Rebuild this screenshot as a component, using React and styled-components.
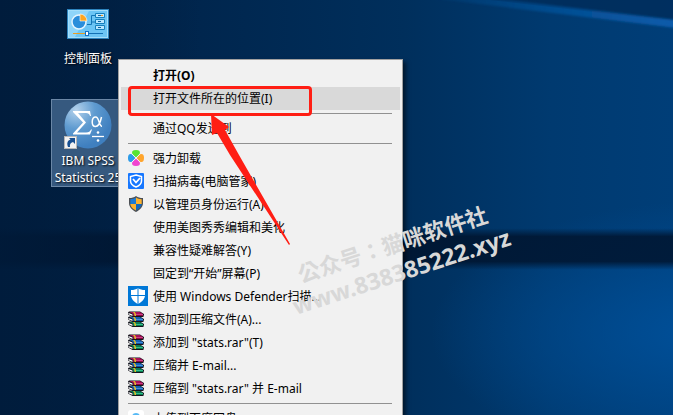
import React from "react";
import styled, { createGlobalStyle } from "styled-components";

const GlobalStyle = createGlobalStyle`
  * {
    box-sizing: border-box;
  }

  body {
    margin: 0;
    overflow: hidden;
    font-family: "Noto Sans", "Noto Sans CJK SC", sans-serif;
    font-size: 12px;
  }
`;

const Desktop = styled.main`
  position: relative;
  height: 100vh;
  overflow: hidden;
  padding: 7px 51px;
  background:
    linear-gradient(to right, rgba(0, 28, 60, 0.7) 0%, transparent 30%),
    linear-gradient(to bottom, transparent 55%, rgba(0, 20, 46, 0.85) 57%, rgba(0, 20, 46, 0.85) 63%, transparent 65%),
    radial-gradient(ellipse at 106% 80%, #00509a 0%, transparent 28%),
    linear-gradient(to right, #001c3c 0%, #00264e 30%, #002f5c 60%, #003a70 82%, #003e78 100%);
`;

const LightBeam = styled.svg`
  position: absolute;
  top: 0;
  right: 0;
  width: 320px;
  height: 60px;
`;

const Shortcuts = styled.nav`
  display: flex;
  flex-direction: column;
  align-items: flex-start;
  gap: 31px;
`;

const Shortcut = styled.button`
  display: flex;
  flex-direction: column;
  align-items: center;
  gap: ${({ $selected }) => ($selected ? "2px" : "10px")};
  width: 74px;
  padding: 0;
  border: 1px solid ${({ $selected }) => ($selected ? "#6b87a6" : "transparent")};
  background: ${({ $selected }) => ($selected ? "#36597f" : "none")};
  color: white;
  font: inherit;
  line-height: 17px;
  text-shadow: 1px 1px 2px black;
  white-space: nowrap;
`;

const Menu = styled.div`
  position: absolute;
  top: 59px;
  left: 118px;
  width: 285px;
  padding: 4px 2px;
  border: 1px solid #a0a0a0;
  background: #f1f1f1;
  box-shadow: 3px 3px 4px rgba(0, 0, 0, 0.5);
`;

const MenuItem = styled.button`
  display: flex;
  align-items: center;
  width: 100%;
  height: 23px;
  padding: 0 0 2px 7px;
  border: 0;
  background: ${({ $active }) => ($active ? "#d9d9d9" : "none")};
  color: black;
  font: inherit;
  font-weight: ${({ $bold }) => ($bold ? 700 : 400)};
  white-space: nowrap;
`;

const IconSlot = styled.span`
  display: flex;
  align-items: center;
  flex: none;
  width: 25px;
`;

const Separator = styled.hr`
  height: 1px;
  margin: 3px 8px 3px 7px;
  border: 0;
  background: #919191;
`;

const Highlight = styled.div`
  position: absolute;
  top: 86px;
  left: 128px;
  width: 184px;
  height: 30px;
  border: 3px solid #ff1e14;
  border-radius: 4px;
  pointer-events: none;
`;

const Arrow = styled.svg`
  position: absolute;
  top: 114px;
  left: 206px;
  pointer-events: none;
`;

const Watermark = styled.div`
  position: absolute;
  top: 229px;
  left: 277px;
  width: 240px;
  color: #d8d8d8;
  font-family: "Noto Sans", "Noto Sans CJK TC", sans-serif;
  font-size: 22px;
  font-weight: 600;
  line-height: 29px;
  text-align: center;
  white-space: nowrap;
  transform: rotate(-18deg);
  pointer-events: none;
`;

const WatermarkUrl = styled.div`
  font-size: 23px;
  font-weight: 700;
`;

const ControlPanelIcon = () => (
  <svg width="42" height="32" viewBox="0 0 42 32">
    <rect x="0.5" y="1.5" width="41" height="29" fill="#6cc5f5" stroke="#2d83bd" />
    <rect x="1.5" y="2.5" width="39" height="27" fill="none" stroke="#a4defb" />
    <path d="M2 3h20L8 29H2z" fill="#8fd5fa" />
    <circle cx="12" cy="14" r="7" fill="#2a8ddb" stroke="#e4f4ff" strokeWidth="1.5" />
    <path d="M13 13V6a7 7 0 0 1 7 7z" fill="#ffa51f" stroke="#fff" strokeWidth="0.6" />
    <path d="M20 16.500h4.500v-9H28M24.500 14H28" fill="none" stroke="#1475b5" />
    <path d="M28.500 5.500h9v4h-9zM28.500 11.500h9v4h-9zM28.500 17.500h9v4h-9z" fill="#b9e7ff" stroke="#1680bd" />
    <path d="M31 7.500h4M31 13.500h3M31 19.500h3" stroke="#1265a0" />
    <path d="M34 7.500h2" stroke="#f49a21" />
    <path d="M6 25.500h14" stroke="#e79d24" />
    <path d="M20 25.500h16" stroke="#1371b5" />
    <rect x="18.500" y="23.500" width="3" height="4" fill="#fff" stroke="#1371c5" />
  </svg>
);

const SpssIcon = () => (
  <svg width="50" height="50" viewBox="0 0 50 50">
    <defs>
      <radialGradient id="ball" cx="25%" cy="18%" r="80%">
        <stop offset="0" stopColor="#b4d2ec" />
        <stop offset="0.5" stopColor="#5f9bd0" />
        <stop offset="1" stopColor="#3f7fbf" />
      </radialGradient>
    </defs>
    <circle cx="25" cy="25" r="23.500" fill="url(#ball)" />
    <path
      d="M10 11h17l1 5h-1c-.6-2.200-2-3-4-3h-8l8 9.500L14 32.500h9c3 0 4-1 5-3h1l-2 5H10v-1l10-11-10-10.500z"
      fill="white"
    />
    <path
      d="M38.500 17c-1 5-3 9.500-6 9.500-2.200 0-3.300-2-3.300-4.500s1.200-5 3.500-5c3.500 0 3.300 9.500 6.300 9.200"
      fill="none"
      stroke="white"
      strokeWidth="1.500"
    />
    <path d="M29 36.500h12" stroke="white" strokeWidth="1.300" />
    <circle cx="35" cy="32.500" r="1.300" fill="white" />
    <circle cx="35" cy="40.500" r="1.300" fill="white" />
    <rect x="1.500" y="36.500" width="12" height="12" fill="#f2f2f2" stroke="#b6b6b6" />
    <path d="M5 47c-1.500-4-.5-6.500 2.500-7.500L6 38h6v6l-2-2c-2.500.5-3.500 2.500-3 5z" fill="#174f91" />
  </svg>
);

const CloverIcon = () => (
  <svg width="16" height="16" viewBox="0 0 16 16">
    <path d="M8 7.500L4.300 4Q3 0 8 0t3.700 4z" fill="#59e333" />
    <path d="M8.500 8L12 4.300Q16 3 16 8t-4 3.700z" fill="#ffa52d" />
    <path d="M8 8.500l3.700 3.500Q13 16 8 16t-3.700-4z" fill="#f044d0" />
    <path d="M7.500 8L4 11.700Q0 13 0 8t4-3.700z" fill="#2d9be8" />
    <path d="M4 4l8 8M12 4l-8 8" stroke="#f1f1f1" />
  </svg>
);

const ManagerIcon = () => (
  <svg width="16" height="16" viewBox="0 0 16 16">
    <rect width="16" height="16" rx="1" fill="#1677ff" />
    <path d="M8 2l5.500 1.500V8c0 3-3 5-5.500 6-2.500-1-5.500-3-5.500-6V3.500z" fill="none" stroke="white" strokeWidth="1.500" />
    <path d="M5 6l3 3.500L12 5" fill="none" stroke="white" strokeWidth="1.800" />
  </svg>
);

const UacIcon = () => (
  <svg width="16" height="16" viewBox="0 0 16 16">
    <path d="M8 0c2 1.500 4 2 7 2v5c0 4-3 7-7 9-4-2-7-5-7-9V2c3 0 5-.5 7-2z" fill="#4b4f54" />
    <path d="M8 1.500V8H2.300V3.200C5 3 6 2.600 8 1.500z" fill="#1b7ad6" />
    <path d="M8 1.500V8h5.700V3.200C11 3 10 2.600 8 1.500zM8 8H2.300c.2 3 2.500 5 5.700 6.600z" fill="#fcb22e" />
    <path d="M8 8h5.700c-.2 3-2.500 5-5.700 6.600z" fill="#1268bf" />
  </svg>
);

const DefenderIcon = () => (
  <svg width="20" height="20" viewBox="0 0 20 20">
    <rect width="20" height="20" fill="#0078d7" />
    <path d="M10 2c2 1.500 4 2 7 2v5c0 4-3 7-7 9-4-2-7-5-7-9V4c3 0 5-.5 7-2z" fill="white" />
    <path d="M10 2v16M2 9.500h16" stroke="#0078d7" />
  </svg>
);

const RarBook = ({ y, cover, spine, shine }) => (
  <g transform={`translate(0 ${y})`}>
    <path d="M0 1.500L1 .5h11L16 3v1.500l-1 .5 1 1H4.500L0 3.500z" fill="#14141c" />
    <path d="M.5 2l4 1.500V5l-4-1.800z" fill="#fff" />
    <path d="M1.500 1h10.300L15 3H5z" fill={cover} />
    <path d="M5 3h10v2H5z" fill={spine} />
    <path d="M6 3.500h9" stroke={shine} strokeWidth="0.8" />
    <path d="M5 1h1.800L8 3v2H6.500V3z" fill="#e0bb24" />
  </g>
);

const RarIcon = () => (
  <svg width="16" height="16" viewBox="0 0 16 16">
    <RarBook y={10} cover="#0a7a55" spine="#067a4e" shine="#3fd09a" />
    <RarBook y={5} cover="#1560b5" spine="#0d4f9f" shine="#4ba0ea" />
    <RarBook y={0} cover="#a81058" spine="#86083f" shine="#e0529a" />
  </svg>
);

const CloudIcon = () => (
  <svg width="16" height="16" viewBox="0 0 16 16">
    <rect width="16" height="16" rx="3" fill="white" />
    <circle cx="8" cy="7" r="4" fill="#55b9f5" />
    <circle cx="4" cy="11" r="3" fill="#338cf0" />
    <circle cx="12" cy="11" r="3" fill="#338cf0" />
  </svg>
);

const menuGroups = [
  [
    { label: "打开(O)", bold: true },
    { label: "打开文件所在的位置(I)", active: true },
  ],
  [{ label: "通过QQ发送到" }],
  [
    { label: "强力卸载", icon: CloverIcon },
    { label: "扫描病毒(电脑管家)", icon: ManagerIcon },
    { label: "以管理员身份运行(A)", icon: UacIcon },
    { label: "使用美图秀秀编辑和美化" },
    { label: "兼容性疑难解答(Y)" },
    { label: "固定到“开始”屏幕(P)" },
    { label: "使用 Windows Defender扫描...", icon: DefenderIcon },
    { label: "添加到压缩文件(A)...", icon: RarIcon },
    { label: '添加到 "stats.rar"(T)', icon: RarIcon },
    { label: "压缩并 E-mail...", icon: RarIcon },
    { label: '压缩到 "stats.rar" 并 E-mail', icon: RarIcon },
  ],
  [{ label: "上传到百度网盘", icon: CloudIcon }],
];

const ContextMenu = () => (
  <Menu role="menu">
    {menuGroups.map((group, index) => (
      <React.Fragment key={index}>
        {index > 0 && <Separator />}
        {group.map(({ label, icon: Icon, bold, active }) => (
          <MenuItem key={label} type="button" role="menuitem" $bold={bold} $active={active}>
            <IconSlot>{Icon && <Icon />}</IconSlot>
            {label}
          </MenuItem>
        ))}
      </React.Fragment>
    ))}
  </Menu>
);

const App = () => {
  return (
    <Desktop>
      <GlobalStyle />
      <LightBeam viewBox="0 0 320 60">
        <defs>
          <linearGradient id="beam" x1="0" x2="1" y1="0" y2="0">
            <stop offset="0" stopColor="#0a5cab" stopOpacity="0" />
            <stop offset="1" stopColor="#0a5cab" />
          </linearGradient>
          <filter id="soft">
            <feGaussianBlur stdDeviation="1" />
          </filter>
        </defs>
        <path d="M120-2h204v24z" fill="#002a56" opacity="0.7" />
        <path d="M60-4h60l204 24v8z" fill="url(#beam)" filter="url(#soft)" />
      </LightBeam>
      <Shortcuts>
        <Shortcut type="button">
          <ControlPanelIcon />
          控制面板
        </Shortcut>
        <Shortcut type="button" $selected>
          <SpssIcon />
          <span>
            IBM SPSS
            <br />
            Statistics 25
          </span>
        </Shortcut>
      </Shortcuts>
      <ContextMenu />
      <Highlight />
      <Arrow width="86" height="132" viewBox="0 0 86 132">
        <path d="M5 0l18 13-4 3 14 25 51 89-1 1-59-90-13-22-5 2z" fill="#ff1e14" />
      </Arrow>
      <Watermark>
        公众号：猫咪软件社
        <WatermarkUrl>www.838385222.xyz</WatermarkUrl>
      </Watermark>
    </Desktop>
  );
};

export default App;
